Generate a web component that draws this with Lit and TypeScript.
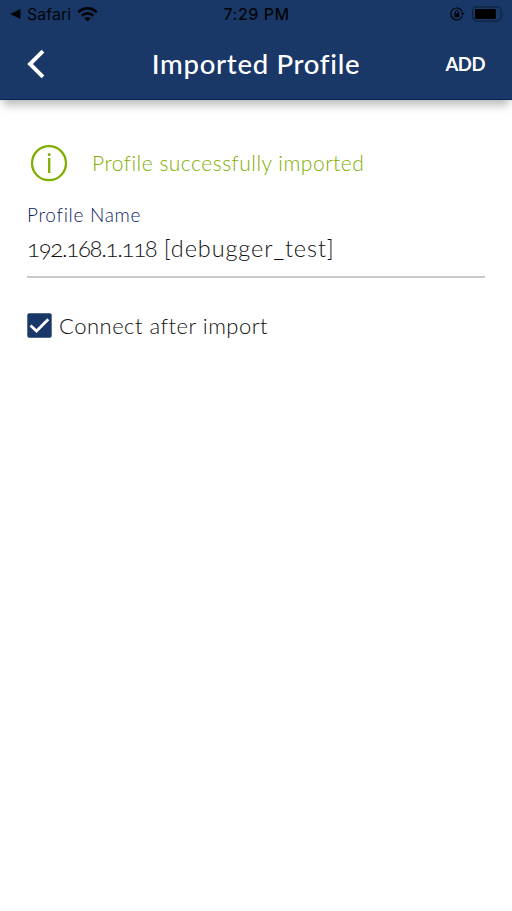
import { LitElement, html, css } from "lit";
import { customElement, state } from "lit/decorators.js";

@customElement("status-bar")
class StatusBar extends LitElement {
  static styles = css`
    :host {
      display: flex;
      align-items: center;
      height: 28px;
      color: #030509;
      font: 400 16px/28px Inter, "Liberation Sans", sans-serif;
    }
    .side {
      flex: 1;
      display: flex;
      align-items: center;
    }
    .left { padding-left: 10px; }
    .right { justify-content: flex-end; padding-right: 7px; }
    .caret { margin-right: 6px; }
    .app { letter-spacing: 0; margin-right: 6px; }
    .time { font-weight: 500; letter-spacing: 0.5px; margin-right: 2px; }
    .lock { margin-right: 7px; }
    svg { display: block; }
  `;

  render() {
    return html`
      <div class="side left">
        <svg class="caret" width="11" height="12" viewBox="0 0 11 12"><path d="M0 6 10.5 1v10z" fill="currentColor" /></svg>
        <span class="app">Safari</span>
        <svg width="21" height="16" viewBox="0 0 21 16">
          <g fill="none" stroke="currentColor" stroke-width="2.7">
            <path d="M1.2 6.3a13 13 0 0 1 18.6 0" />
            <path d="M4.7 9.8a8.1 8.1 0 0 1 11.6 0" />
          </g>
          <path d="M10.5 15.4 7.3 12.3a4.5 4.5 0 0 1 6.4 0z" fill="currentColor" />
        </svg>
      </div>
      <span class="time">7:29 PM</span>
      <div class="side right">
        <svg class="lock" width="15" height="14" viewBox="0 0 15 14">
          <path d="M12.1 4.2A6 6 0 1 0 12.2 9.6M11.2 11A6 6 0 0 1 10.6 11.5" fill="none" stroke="currentColor" stroke-width="1.2" />
          <path d="M10.3 5.6h4.5l-2.2 3z" fill="currentColor" />
          <rect x="4.4" y="6.2" width="5" height="4" rx=".5" fill="currentColor" />
          <path d="M5.4 6.4V5a1.5 1.5 0 0 1 3 0v1.4" fill="none" stroke="currentColor" />
        </svg>
        <svg width="33" height="16" viewBox="0 0 33 16">
          <rect x=".7" y=".9" width="28.4" height="14.2" rx="4" fill="none" stroke="#10213f" stroke-width="1.2" />
          <rect x="3" y="3" width="20.8" height="10" rx="1.3" fill="#000" />
          <path d="M31 5.8q1.5 2.2 0 4.4z" fill="#10213f" />
        </svg>
      </div>
    `;
  }
}

@customElement("app-root")
class AppRoot extends LitElement {
  @state() private connect = true;

  static styles = css`
    :host {
      display: block;
      min-height: 100vh;
      background: #fff;
      color: #111;
      font-family: Lato, "Open Sans", sans-serif;
      font-weight: 300;
    }
    .header {
      height: 100px;
      box-sizing: border-box;
      background: #1a3867;
      border-bottom: 1px solid #05205a;
      box-shadow: 0 8px 9px -3px rgba(0, 0, 0, 0.28);
    }
    .nav {
      display: grid;
      grid-template-columns: 1fr auto 1fr;
      align-items: center;
      height: 72px;
      padding: 0 27px;
      color: #fff;
    }
    .nav svg, .notice svg, .box { display: block; }
    .title { font-size: 27.5px; line-height: 32px; font-weight: 500; letter-spacing: 0.7px; }
    .add { justify-self: end; font-size: 18.5px; font-weight: 700; letter-spacing: -0.5px; }
    .content { padding: 44px 27px 0; }
    .notice {
      display: flex;
      align-items: center;
      gap: 24px;
      height: 38px;
      padding-left: 3px;
      color: #7fae00;
      font-size: 21px;
    }
    .message { padding-bottom: 2px; letter-spacing: 0.5px; }
    .label {
      margin-top: 20px;
      font-size: 19px;
      line-height: 25px;
      color: #0c2560;
      letter-spacing: 0.7px;
    }
    .value {
      height: 51px;
      box-sizing: border-box;
      border-bottom: 2px solid #c9c9c9;
      font-size: 23.5px;
      line-height: 41px;
      letter-spacing: 0.9px;
    }
    .address {
      font-size: 24px;
      letter-spacing: -1.3px;
      font-variant-numeric: oldstyle-nums;
    }
    .check {
      display: flex;
      align-items: center;
      gap: 7px;
      margin-top: 34px;
      height: 26px;
      font-size: 22px;
      letter-spacing: 0.5px;
    }
  `;

  render() {
    return html`
      <header class="header">
        <status-bar></status-bar>
        <div class="nav">
          <svg width="18" height="30" viewBox="0 0 18 30"><path d="M16 2.2 3 15 16 27.8" fill="none" stroke="currentColor" stroke-width="3.9" /></svg>
          <span class="title">Imported Profile</span>
          <span class="add">ADD</span>
        </div>
      </header>
      <main class="content">
        <div class="notice">
          <svg width="38" height="38" viewBox="0 0 38 38">
            <circle cx="19" cy="19.2" r="17" fill="none" stroke="currentColor" stroke-width="2.3" />
            <path d="M19.2 14v15" stroke="currentColor" stroke-width="2.3" />
            <circle cx="19.2" cy="10.5" r="1.5" fill="currentColor" />
          </svg>
          <span class="message">Profile successfully imported</span>
        </div>
        <div class="label">Profile Name</div>
        <div class="value"><span class="address">192.168.1.118</span> [debugger_test]</div>
        <div class="check" @click=${() => (this.connect = !this.connect)}>
          <svg class="box" width="25" height="25" viewBox="0 0 25 25">
            <rect x=".3" y=".3" width="24.4" height="24.4" rx="2" fill="#1a3867" />
            ${this.connect
              ? html`<svg viewBox="0 0 25 25"><path d="M3.5 12.4 9.5 18 21.3 6.2" fill="none" stroke="#fff" stroke-width="2.7" /></svg>`
              : null}
          </svg>
          <span>Connect after import</span>
        </div>
      </main>
    `;
  }
}
